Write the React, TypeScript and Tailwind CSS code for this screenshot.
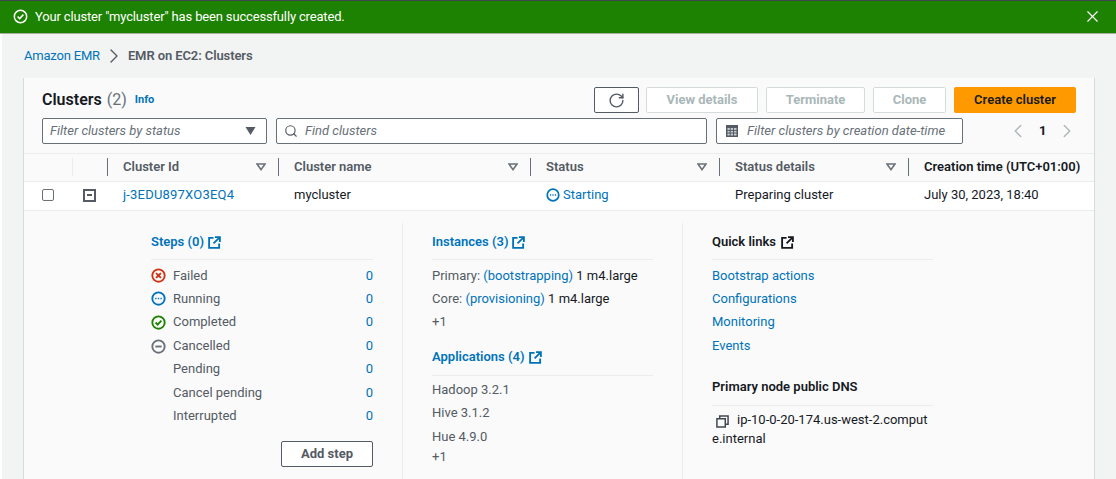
import { ChevronLeft, ChevronRight, RotateCw, Search, X } from "lucide-react";

const FONT = "font-['Roboto','Noto_Sans',sans-serif]";

const STEP_ROWS = [
  { label: "Failed", icon: "failed", h: "h-[23px]" },
  { label: "Running", icon: "running", h: "h-[23px]" },
  { label: "Completed", icon: "completed", h: "h-[24px]" },
  { label: "Cancelled", icon: "cancelled", h: "h-[24px]" },
  { label: "Pending", h: "h-[22px]" },
  { label: "Cancel pending", h: "h-[25px]" },
  { label: "Interrupted", h: "h-[22px]" },
];

const QUICK_LINKS = ["Bootstrap actions", "Configurations"];

function ExternalIcon({ className }: { className?: string }) {
  return (
    <svg viewBox="0 0 14 14" className={className} fill="none" stroke="currentColor" strokeWidth="2">
      <path d="M6 2H1.2v10.8H12V8" />
      <path d="M7.5 1.2h5.3v5.3M12.5 1.5 6 8" />
    </svg>
  );
}

function StatusIcon({ kind, className }: { kind?: string; className?: string }) {
  if (kind === "failed")
    return (
      <svg viewBox="0 0 16 16" className={`text-[#d13212] ${className}`} fill="none" stroke="currentColor" strokeWidth="2">
        <circle cx="8" cy="8" r="6.6" />
        <path d="m5.4 5.4 5.2 5.2M10.6 5.4l-5.2 5.2" />
      </svg>
    );
  if (kind === "running")
    return (
      <svg viewBox="0 0 16 16" className={`text-[#0073bb] ${className}`} fill="none" stroke="currentColor" strokeWidth="2">
        <circle cx="8" cy="8" r="6.6" />
        <path d="M4.5 8h1.4M7.3 8h1.4M10.1 8h1.4" strokeWidth="1.7" />
      </svg>
    );
  if (kind === "completed")
    return (
      <svg viewBox="0 0 16 16" className={`text-[#1d8102] ${className}`} fill="none" stroke="currentColor" strokeWidth="2">
        <circle cx="8" cy="8" r="6.6" />
        <path d="m4.9 8 2.2 2.2 4-4.2" />
      </svg>
    );
  if (kind === "cancelled")
    return (
      <svg viewBox="0 0 16 16" className={`text-[#687078] ${className}`} fill="none" stroke="currentColor" strokeWidth="2">
        <circle cx="8" cy="8" r="6.6" />
        <path d="M4.6 8h6.8" />
      </svg>
    );
  return <span className={className} />;
}

function SortIcon() {
  return (
    <svg viewBox="0 0 10 8" className="h-[8px] w-[10px] shrink-0 text-[#687078]" fill="none" stroke="currentColor" strokeWidth="1.5">
      <path d="M1 1h8L5 6.6Z" />
    </svg>
  );
}

function HeaderCell({
  title,
  sort = true,
  dark,
  className,
}: {
  title: string;
  sort?: boolean;
  dark?: boolean;
  className: string;
}) {
  return (
    <div className={`flex items-center ${className}`}>
      <span className="h-[18px] w-px shrink-0 bg-[#687078]" />
      <span className={`ml-[15px] whitespace-nowrap font-semibold ${dark ? "text-[#16191f]" : "text-[#545b64]"}`}>
        {title}
      </span>
      {sort && (
        <span className="ml-auto mr-[12px]">
          <SortIcon />
        </span>
      )}
    </div>
  );
}

function ActionButton({ label, className }: { label: string; className: string }) {
  return (
    <div
      className={`flex h-[26px] items-center justify-center rounded-[2px] border border-[#d5dbdb] bg-white pb-[1px] font-bold text-[#aab7b8] ${className}`}
    >
      {label}
    </div>
  );
}

export default function App() {
  return (
    <div className={`${FONT} h-[479px] w-[1116px] overflow-hidden bg-[#f2f3f3] text-[13px] leading-[18px] text-[#16191f]`}>
      <div className="h-[1px] bg-[#414750]" />
      <div className="flex h-[33px] items-center border-b border-[#a8b0a5] bg-[#1d8102] pb-[1px] pl-[13px] pr-[14px] text-white">
        <svg viewBox="0 0 16 16" className="h-[15px] w-[15px]" fill="none" stroke="currentColor" strokeWidth="1.6">
          <circle cx="8" cy="8" r="6.6" />
          <path d="m4.9 8 2.2 2.2 4-4.2" />
        </svg>
        <span className="ml-[7px] tracking-[-0.16px]">Your cluster "mycluster" has been successfully created.</span>
        <X className="ml-auto h-[19px] w-[19px]" strokeWidth={1.4} />
      </div>

      <div className="border-l-[2px] border-[#ffffff] pl-[21px] pr-[21px]">
        <div className="flex h-[44px] items-center text-[#545b64]">
          <span className="ml-[1px] tracking-[-0.2px] text-[#0073bb]">Amazon EMR</span>
          <ChevronRight className="ml-[2px] h-[24px] w-[24px] text-[#545b64]" strokeWidth={1.4} />
          <span className="ml-[2px] font-semibold tracking-[-0.1px]">EMR on EC2: Clusters</span>
        </div>

        <div className="h-[401px] overflow-hidden border-x border-[#d5dbdb] bg-[#fafafa]">
          <div className="flex h-[35px] items-end pl-[18px] pr-[18px]">
            <div className="flex items-center pb-[4px]">
              <span className="text-[16px] font-semibold">Clusters</span>
              <span className="ml-[5px] text-[16px] text-[#687078]">(2)</span>
              <span className="ml-[8px] text-[11px] font-bold text-[#0073bb]">Info</span>
            </div>
            <div className="ml-auto flex">
              <div className="flex h-[26px] w-[45px] items-center justify-center rounded-[2px] border border-[#545b64] bg-white">
                <RotateCw className="h-[17px] w-[17px] text-[#545b64]" strokeWidth={2} />
              </div>
              <ActionButton label="View details" className="ml-[7px] w-[112px]" />
              <ActionButton label="Terminate" className="ml-[8px] w-[99px]" />
              <ActionButton label="Clone" className="ml-[8px] w-[73px]" />
              <div className="ml-[8px] flex h-[26px] w-[122px] items-center justify-center rounded-[2px] bg-[#ff9900] pb-[1px] font-semibold text-[#16191f]">
                Create cluster
              </div>
            </div>
          </div>

          <div className="mt-[5px] flex h-[26px] pl-[18px]">
            <div className="flex w-[225px] items-center rounded-[2px] border border-[#687078] bg-white pl-[7px] pr-[10px] italic text-[#687078]">
              Filter clusters by status
              <svg viewBox="0 0 10 8" className="ml-auto h-[8px] w-[11px] fill-[#545b64]">
                <path d="M0 0h10L5 8Z" />
              </svg>
            </div>
            <div className="ml-[9px] flex w-[431px] items-center rounded-[2px] border border-[#687078] bg-white pl-[7px] italic text-[#687078]">
              <Search className="h-[14px] w-[14px] text-[#545b64]" strokeWidth={2} />
              <span className="ml-[7px]">Find clusters</span>
            </div>
            <div className="ml-[9px] flex w-[247px] items-center rounded-[2px] border border-[#687078] bg-white pl-[9px] italic text-[#687078]">
              <svg viewBox="0 0 12 12" className="h-[12px] w-[12px]">
                <rect width="12" height="12" fill="#545b64" />
                <path d="M1.5 3h9v7.5h-9z" fill="#c9ced2" />
                <path d="M4.2 3v8M7.5 3v8M1 5.4h10M1 8h10" stroke="#545b64" />
              </svg>
              <span className="ml-[9px] whitespace-nowrap tracking-[0.02px]">Filter clusters by creation date-time</span>
            </div>
            <div className="ml-[44px] flex items-center">
              <ChevronLeft className="h-[22px] w-[22px] text-[#aab7b8]" strokeWidth={1.5} />
              <span className="ml-[10px] font-bold">1</span>
              <ChevronRight className="ml-[10px] h-[22px] w-[22px] text-[#aab7b8]" strokeWidth={1.5} />
            </div>
          </div>

          <div className="mt-[9px] flex h-[29px] items-center border-y border-[#eaeded] bg-[#fafafa] pb-[1px]">
            <div className="w-[48px]" />
            <div className="flex w-[35px] items-center">
              <span className="h-[18px] w-px bg-[#eaeded]" />
            </div>
            <HeaderCell title="Cluster Id" className="w-[171px]" />
            <HeaderCell title="Cluster name" className="w-[252px]" />
            <HeaderCell title="Status" className="w-[189px]" />
            <HeaderCell title="Status details" className="w-[189px]" />
            <HeaderCell title="Creation time (UTC+01:00)" dark sort={false} className="w-[186px]" />
          </div>

          <div className="flex h-[29px] items-center border-b border-[#eaeded] bg-white pb-[2px]">
            <div className="flex w-[48px] justify-center">
              <span className="h-[12px] w-[12px] rounded-[2px] border border-[#687078] bg-white" />
            </div>
            <div className="flex w-[35px] justify-center">
              <span className="flex h-[13px] w-[13px] items-center justify-center border-[2px] border-[#545b64]">
                <span className="h-[2px] w-[5px] bg-[#545b64]" />
              </span>
            </div>
            <div className="w-[171px] pl-[16px] tracking-[0.2px] text-[#0073bb]">j-3EDU897XO3EQ4</div>
            <div className="w-[252px] pl-[16px]">mycluster</div>
            <div className="flex w-[189px] items-center pl-[16px] text-[#0073bb]">
              <StatusIcon kind="running" className="h-[14px] w-[14px]" />
              <span className="ml-[3px]">Starting</span>
            </div>
            <div className="w-[189px] pl-[16px]">Preparing cluster</div>
            <div className="w-[186px] whitespace-nowrap pl-[16px]">July 30, 2023, 18:40</div>
          </div>

          <div className="ml-[127px] mt-[12px] flex h-[260px]">
            <div className="w-[251px] pr-[29px] pt-[10px]">
              <div className="flex h-[18px] items-center font-semibold text-[#0073bb]">
                Steps (0)
                <ExternalIcon className="ml-[4px] h-[13px] w-[13px]" />
              </div>
              <div className="mb-[4px] mt-[8px] border-t border-[#eaeded]" />
              {STEP_ROWS.map((row) => (
                <div key={row.label} className={`flex items-center text-[#545b64] ${row.h}`}>
                  <StatusIcon kind={row.icon} className="h-[15px] w-[15px] shrink-0" />
                  <span className="ml-[7px]">{row.label}</span>
                  <span className="ml-auto text-[#0073bb]">0</span>
                </div>
              ))}
              <div className="mt-[14px] flex justify-end">
                <div className="flex h-[26px] w-[92px] items-center justify-center rounded-[2px] border border-[#545b64] bg-white pb-[1px] font-bold text-[#545b64]">
                  Add step
                </div>
              </div>
            </div>

            <div className="w-[280px] border-l border-[#eaeded] pl-[29px] pr-[29px] pt-[10px]">
              <div className="flex h-[18px] items-center font-semibold text-[#0073bb]">
                Instances (3)
                <ExternalIcon className="ml-[3px] h-[13px] w-[13px]" />
              </div>
              <div className="mb-[4px] mt-[8px] border-t border-[#eaeded]" />
              <div className="flex h-[23px] items-center whitespace-nowrap text-[#545b64]">
                Primary:&nbsp;<span className="text-[#0073bb]">(bootstrapping)</span>&nbsp;<span className="text-[#16191f]">1 m4.large</span>
              </div>
              <div className="flex h-[23px] items-center whitespace-nowrap text-[#545b64]">
                Core:&nbsp;<span className="text-[#0073bb]">(provisioning)</span>&nbsp;<span className="text-[#16191f]">1 m4.large</span>
              </div>
              <div className="flex h-[23px] items-center text-[#545b64]">+1</div>
              <div className="mt-[15px] flex h-[18px] items-center font-semibold text-[#0073bb]">
                Applications (4)
                <ExternalIcon className="ml-[5px] h-[13px] w-[13px]" />
              </div>
              <div className="mb-[2px] mt-[9px] border-t border-[#eaeded]" />
              <div className="flex h-[23px] items-center text-[#545b64]">Hadoop 3.2.1</div>
              <div className="flex h-[24px] items-center text-[#545b64]">Hive 3.1.2</div>
              <div className="flex h-[24px] items-center text-[#545b64]">Hue 4.9.0</div>
              <div className="flex h-[16px] items-center text-[#545b64]">+1</div>
            </div>

            <div className="w-[280px] border-l border-[#eaeded] pl-[29px] pr-[29px] pt-[10px]">
              <div className="flex h-[18px] items-center font-semibold">
                Quick links
                <ExternalIcon className="ml-[5px] h-[13px] w-[13px]" />
              </div>
              <div className="mb-[4px] mt-[8px] border-t border-[#eaeded]" />
              {QUICK_LINKS.map((link) => (
                <div key={link} className="flex h-[23px] items-center text-[#0073bb]">
                  {link}
                </div>
              ))}
              <div className="flex h-[24px] items-center text-[#0073bb]">Monitoring</div>
              <div className="flex h-[24px] items-center text-[#0073bb]">Events</div>
              <div className="mt-[20px] flex h-[18px] items-center font-semibold">Primary node public DNS</div>
              <div className="mb-[4px] mt-[9px] border-t border-[#eaeded]" />
              <div className="break-all leading-[19px]">
                <svg viewBox="0 0 14 14" className="mb-[-2px] ml-[4px] mr-[8px] inline-block h-[13px] w-[13px] text-[#414750]" fill="none" stroke="currentColor" strokeWidth="1.6">
                  <path d="M4 4V1h9v9h-3" />
                  <path d="M1 4h9v9H1z" />
                </svg>
                ip-10-0-20-174.us-west-2.compute.internal
              </div>
            </div>
          </div>
        </div>
      </div>
    </div>
  );
}
